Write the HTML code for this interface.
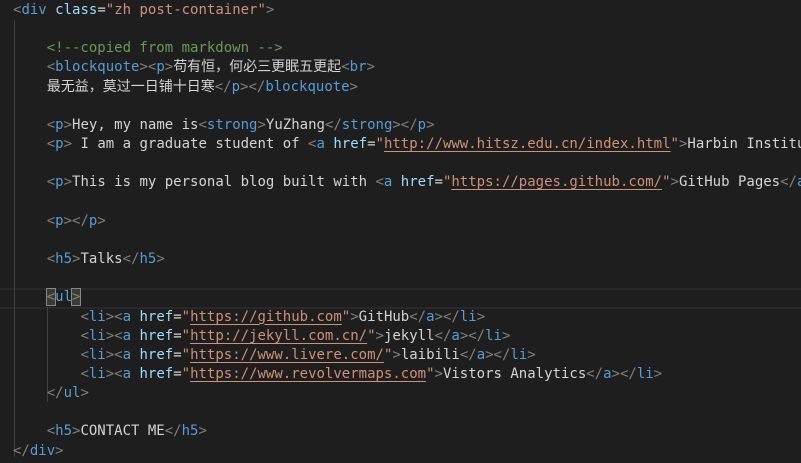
<!DOCTYPE html>
<html><head><meta charset="utf-8"><style>
html,body{margin:0;padding:0;background:#1e1e1e;width:801px;height:463px;overflow:hidden;position:relative}
pre{margin:0;position:absolute;left:13px;top:1px;font-family:"DejaVu Sans Mono","Noto Sans CJK SC",monospace;font-size:14px;line-height:19.15px;color:#d4d4d4;white-space:pre}
.b{color:#808080}.t{color:#569cd6}.a{color:#9cdcfe}.s{color:#ce9178}.c{color:#6a9955}
.u{text-decoration:underline;text-underline-offset:3px;text-decoration-color:#ce9178}
.g{position:absolute;width:1px;background:#404040}
.cl{position:absolute;left:0;right:0;top:288px;height:17px;border-top:2px solid #282828;border-bottom:2px solid #282828}
.m{outline:1px solid #888;background:#3a3d35}
</style></head><body>
<div class="cl"></div>
<div class="g" style="left:14px;top:20px;height:437px"></div>
<div class="g" style="left:47px;top:307px;height:95px"></div>
<pre><span class="b">&lt;</span><span class="t">div</span> <span class="a">class</span>=<span class="s">"zh post-container"</span><span class="b">&gt;</span>

    <span class="c">&lt;!--copied from markdown --&gt;</span>
    <span class="b">&lt;</span><span class="t">blockquote</span><span class="b">&gt;&lt;</span><span class="t">p</span><span class="b">&gt;</span>苟有恒，何必三更眠五更起<span class="b">&lt;</span><span class="t">br</span><span class="b">&gt;</span>
    最无益，莫过一日铺十日寒<span class="b">&lt;/</span><span class="t">p</span><span class="b">&gt;&lt;/</span><span class="t">blockquote</span><span class="b">&gt;</span>

    <span class="b">&lt;</span><span class="t">p</span><span class="b">&gt;</span>Hey, my name is<span class="b">&lt;</span><span class="t">strong</span><span class="b">&gt;</span>YuZhang<span class="b">&lt;/</span><span class="t">strong</span><span class="b">&gt;&lt;/</span><span class="t">p</span><span class="b">&gt;</span>
    <span class="b">&lt;</span><span class="t">p</span><span class="b">&gt;</span> I am a graduate student of <span class="b">&lt;</span><span class="t">a</span> <span class="a">href</span>=<span class="s">"<span class="u">http://www.hitsz.edu.cn/index.html</span>"</span><span class="b">&gt;</span>Harbin Institute

    <span class="b">&lt;</span><span class="t">p</span><span class="b">&gt;</span>This is my personal blog built with <span class="b">&lt;</span><span class="t">a</span> <span class="a">href</span>=<span class="s">"<span class="u">https://pages.github.com/</span>"</span><span class="b">&gt;</span>GitHub Pages<span class="b">&lt;/</span><span class="t">a</span><span class="b">&gt;</span>

    <span class="b">&lt;</span><span class="t">p</span><span class="b">&gt;&lt;/</span><span class="t">p</span><span class="b">&gt;</span>

    <span class="b">&lt;</span><span class="t">h5</span><span class="b">&gt;</span>Talks<span class="b">&lt;/</span><span class="t">h5</span><span class="b">&gt;</span>

    <span class="b m">&lt;</span><span class="t">ul</span><span class="b m">&gt;</span>
        <span class="b">&lt;</span><span class="t">li</span><span class="b">&gt;&lt;</span><span class="t">a</span> <span class="a">href</span>=<span class="s">"<span class="u">https://github.com</span>"</span><span class="b">&gt;</span>GitHub<span class="b">&lt;/</span><span class="t">a</span><span class="b">&gt;&lt;/</span><span class="t">li</span><span class="b">&gt;</span>
        <span class="b">&lt;</span><span class="t">li</span><span class="b">&gt;&lt;</span><span class="t">a</span> <span class="a">href</span>=<span class="s">"<span class="u">http://jekyll.com.cn/</span>"</span><span class="b">&gt;</span>jekyll<span class="b">&lt;/</span><span class="t">a</span><span class="b">&gt;&lt;/</span><span class="t">li</span><span class="b">&gt;</span>
        <span class="b">&lt;</span><span class="t">li</span><span class="b">&gt;&lt;</span><span class="t">a</span> <span class="a">href</span>=<span class="s">"<span class="u">https://www.livere.com/</span>"</span><span class="b">&gt;</span>laibili<span class="b">&lt;/</span><span class="t">a</span><span class="b">&gt;&lt;/</span><span class="t">li</span><span class="b">&gt;</span>
        <span class="b">&lt;</span><span class="t">li</span><span class="b">&gt;&lt;</span><span class="t">a</span> <span class="a">href</span>=<span class="s">"<span class="u">https://www.revolvermaps.com</span>"</span><span class="b">&gt;</span>Vistors Analytics<span class="b">&lt;/</span><span class="t">a</span><span class="b">&gt;&lt;/</span><span class="t">li</span><span class="b">&gt;</span>
    <span class="b">&lt;/</span><span class="t">ul</span><span class="b">&gt;</span>

    <span class="b">&lt;</span><span class="t">h5</span><span class="b">&gt;</span>CONTACT ME<span class="b">&lt;/</span><span class="t">h5</span><span class="b">&gt;</span>
<span class="b">&lt;/</span><span class="t">div</span><span class="b">&gt;</span></pre>
</body></html>
